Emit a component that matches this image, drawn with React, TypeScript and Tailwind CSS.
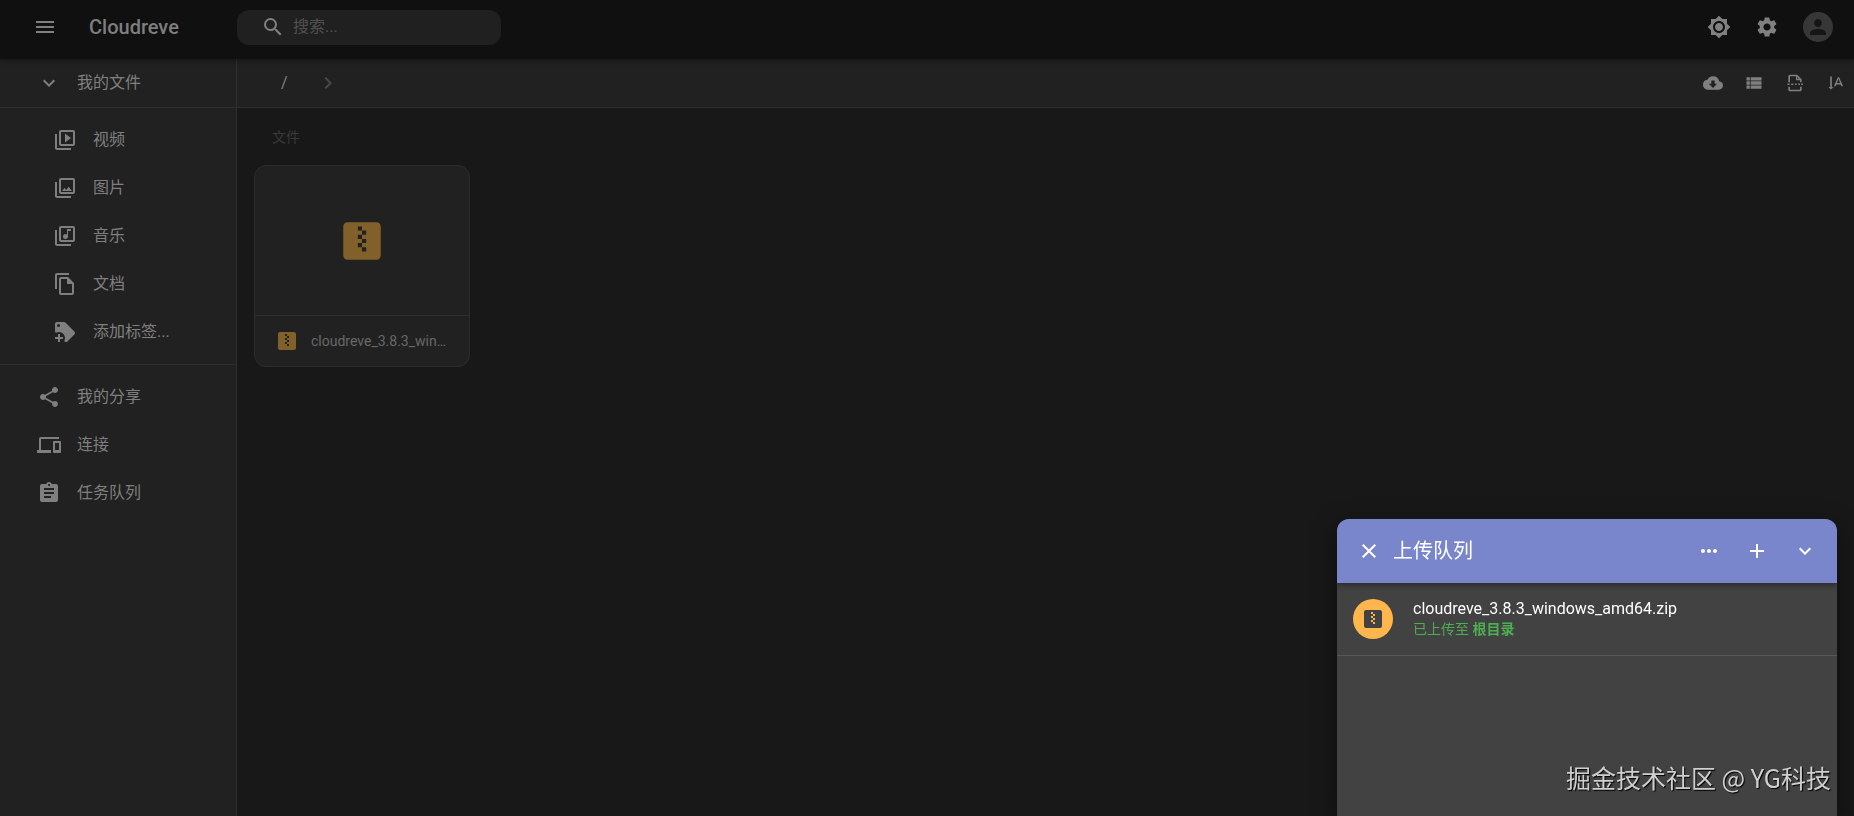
import { useState } from 'react';
import type { ReactNode } from 'react';
import {
  MdAdd,
  MdAssignment,
  MdBrightness7,
  MdChevronRight,
  MdClose,
  MdCloudDownload,
  MdDevices,
  MdExpandMore,
  MdMenu,
  MdMoreHoriz,
  MdOutlineFileCopy,
  MdOutlineLibraryMusic,
  MdOutlinePhotoLibrary,
  MdOutlineVideoLibrary,
  MdPerson,
  MdSearch,
  MdSettings,
  MdShare,
  MdTextRotateVertical,
  MdViewList,
} from 'react-icons/md';

const ZipIcon = ({ size }: { size: number }) => (
  <svg width={size} height={size} viewBox="0 0 24 24" fill="currentColor" aria-hidden="true">
    <path d="M14,17H12V15H10V13H12V15H14M14,9H12V11H14V13H12V11H10V9H12V7H10V5H12V7H14M19,3H5A2,2 0 0,0 3,5V19A2,2 0 0,0 5,21H19A2,2 0 0,0 21,19V5C21,3.89 20.1,3 19,3Z" />
  </svg>
);

const TagPlusIcon = () => (
  <svg width="24" height="24" viewBox="0 0 24 24" fill="currentColor" aria-hidden="true">
    <path d="M21.41,11.58L12.41,2.58C12.04,2.21 11.53,2 11,2H4A2,2 0 0,0 2,4V11C2,11.53 2.21,12.04 2.59,12.41L3,12.81C3.9,12.27 4.94,12 6,12A6,6 0 0,1 12,18C12,19.06 11.72,20.09 11.18,21L11.58,21.4C11.95,21.78 12.47,22 13,22C13.53,22 14.04,21.79 14.41,21.41L21.41,14.41C21.79,14.04 22,13.53 22,13C22,12.47 21.79,11.96 21.41,11.58M5.5,7A1.5,1.5 0 0,1 4,5.5A1.5,1.5 0 0,1 5.5,4A1.5,1.5 0 0,1 7,5.5A1.5,1.5 0 0,1 5.5,7M10,19H7V22H5V19H2V17H5V14H7V17H10V19Z" />
  </svg>
);

const PageBreakIcon = () => (
  <svg width="20" height="20" viewBox="0 0 24 24" fill="none" stroke="currentColor" strokeWidth="2" aria-hidden="true">
    <path d="M5 11V4a1 1 0 0 1 1-1h8l5 5v3" />
    <path d="M14 3v5h5" strokeWidth="1.5" />
    <path d="M3 13.5h2.5M7.5 13.5h2.5M12 13.5h2M16 13.5h2M19.5 13.5h2" />
    <path d="M5 16.5V20a1 1 0 0 0 1 1h12a1 1 0 0 0 1-1v-3.5" />
  </svg>
);

const tags = [
  { label: '视频', icon: <MdOutlineVideoLibrary size={24} /> },
  { label: '图片', icon: <MdOutlinePhotoLibrary size={24} /> },
  { label: '音乐', icon: <MdOutlineLibraryMusic size={24} /> },
  { label: '文档', icon: <MdOutlineFileCopy size={24} /> },
  { label: '添加标签...', icon: <TagPlusIcon /> },
];

const links = [
  { label: '我的分享', icon: <MdShare size={24} /> },
  { label: '连接', icon: <MdDevices size={24} /> },
  { label: '任务队列', icon: <MdAssignment size={24} /> },
];

const tools = [
  { label: '离线下载', icon: <MdCloudDownload size={20} /> },
  { label: '列表视图', icon: <MdViewList size={20} /> },
  { label: '分页', icon: <PageBreakIcon /> },
  { label: '排序', icon: <MdTextRotateVertical size={20} /> },
];

const NavItem = ({ icon, label, nested }: { icon: ReactNode; label: string; nested?: boolean }) => (
  <li>
    <button
      className={`flex h-12 w-full items-center gap-4 text-base text-[#7f7f7f] ${nested ? 'pl-[53px]' : 'pl-[37px]'}`}
    >
      {icon}
      <span>{label}</span>
    </button>
  </li>
);

const IconButton = ({ label, children }: { label: string; children: ReactNode }) => (
  <button aria-label={label} className="flex size-12 items-center justify-center">
    {children}
  </button>
);

const Header = () => (
  <header className="relative z-10 flex h-[59px] items-center bg-[#101010] pr-[21px] pb-[5px] pl-[21px] text-[#808080] shadow-[0_2px_6px_rgba(0,0,0,0.35)]">
    <IconButton label="菜单">
      <MdMenu size={24} />
    </IconButton>
    <h1 className="ml-5 w-[148px] text-xl font-medium text-[#7e7e7e]">Cloudreve</h1>
    <label className="flex h-[35px] w-[264px] items-center rounded-xl bg-[#202020] pl-6">
      <MdSearch size={24} className="shrink-0" />
      <input
        type="text"
        placeholder="搜索..."
        aria-label="搜索"
        className="ml-2 w-full min-w-0 bg-transparent text-base text-[#808080] outline-none placeholder:text-[#505050]"
      />
    </label>
    <div className="ml-auto flex items-center">
      <IconButton label="切换主题">
        <MdBrightness7 size={24} />
      </IconButton>
      <IconButton label="设置">
        <MdSettings size={24} />
      </IconButton>
      <button
        aria-label="账户"
        className="ml-3 flex size-[30px] items-center justify-center rounded-full bg-[#373737] text-[#161616]"
      >
        <MdPerson size={24} />
      </button>
    </div>
  </header>
);

const Sidebar = () => (
  <nav className="w-[237px] shrink-0 border-r border-[#2e2e2e] bg-[#212121]">
    <button className="flex h-[49px] w-full items-center gap-4 border-b border-[#2e2e2e] pl-[37px] text-base text-[#7f7f7f]">
      <MdExpandMore size={24} />
      <span>我的文件</span>
    </button>
    <ul className="border-b border-[#2e2e2e] py-2">
      {tags.map((t) => (
        <NavItem key={t.label} icon={t.icon} label={t.label} nested />
      ))}
    </ul>
    <ul className="py-2">
      {links.map((l) => (
        <NavItem key={l.label} icon={l.icon} label={l.label} />
      ))}
    </ul>
  </nav>
);

const FileCard = ({ name }: { name: string }) => (
  <button className="w-[216px] overflow-hidden rounded-xl border border-[#2c2c2c] bg-[#212121] text-left">
    <div className="flex h-[150px] items-center justify-center border-b border-[#2e2e2e] text-[#82602a]">
      <ZipIcon size={50} />
    </div>
    <div className="flex h-[50px] items-center gap-3 px-5 text-[#82602a]">
      <span className="shrink-0">
        <ZipIcon size={24} />
      </span>
      <span className="min-w-0 truncate text-sm text-[#686868]">{name}</span>
    </div>
  </button>
);

const Uploader = () => {
  const [open, setOpen] = useState(true);

  return (
    <section className="fixed right-[17px] bottom-0 z-20 w-[500px] overflow-hidden rounded-t-xl bg-[#424242] text-white shadow-[0_8px_24px_rgba(0,0,0,0.5)]">
      <div className="relative flex h-16 items-center bg-[#7986cb] px-2 shadow-[0_2px_6px_rgba(0,0,0,0.4)]">
        <IconButton label="关闭">
          <MdClose size={24} />
        </IconButton>
        <h2 className="flex-1 text-xl">上传队列</h2>
        <IconButton label="更多">
          <MdMoreHoriz size={24} />
        </IconButton>
        <IconButton label="添加">
          <MdAdd size={24} />
        </IconButton>
        <button
          aria-label="折叠"
          className="flex size-12 items-center justify-center"
          onClick={() => setOpen(!open)}
        >
          <MdExpandMore size={24} />
        </button>
      </div>
      {open && (
        <div className="h-[233px]">
          <div className="flex items-center gap-5 border-b border-[#575757] py-4 pl-4">
            <div className="flex size-10 items-center justify-center rounded-full bg-[#ffb74d] text-[#424242]">
              <ZipIcon size={24} />
            </div>
            <div>
              <p className="text-base leading-5">cloudreve_3.8.3_windows_amd64.zip</p>
              <p className="text-sm leading-5 text-[#4caf50]">
                已上传至{' '}
                <a href="#" className="font-bold">
                  根目录
                </a>
              </p>
            </div>
          </div>
        </div>
      )}
    </section>
  );
};

const App = () => (
  <div className="flex min-h-screen flex-col bg-[#181818] font-['Roboto','Noto_Sans_CJK_SC',sans-serif]">
    <Header />
    <div className="flex flex-1">
      <Sidebar />
      <main className="min-w-0 flex-1">
        <div className="flex h-[49px] items-center border-b border-[#2e2e2e] bg-[#212121] pl-11 text-[#808080]">
          <a href="#" className="text-base">
            /
          </a>
          <MdChevronRight size={24} className="ml-7 text-[#484848]" />
          <div className="ml-auto flex gap-[5px]">
            {tools.map((t) => (
              <button key={t.label} aria-label={t.label} className="flex h-12 w-9 items-center justify-center">
                {t.icon}
              </button>
            ))}
          </div>
        </div>
        <div className="px-[17px] pt-[19px]">
          <h2 className="mb-[18px] pl-[18px] text-sm text-[#3a3a3a]">文件</h2>
          <FileCard name="cloudreve_3.8.3_windows_amd64.zip" />
        </div>
      </main>
    </div>
    <Uploader />
    <p className="fixed right-[23px] bottom-[21px] z-30 font-['Noto_Sans_CJK_SC',sans-serif] text-[25px] leading-9 text-[#cfcfcf] [text-shadow:1px_1px_1px_#000]">
      掘金技术社区 @ YG科技
    </p>
  </div>
);

export default App;
